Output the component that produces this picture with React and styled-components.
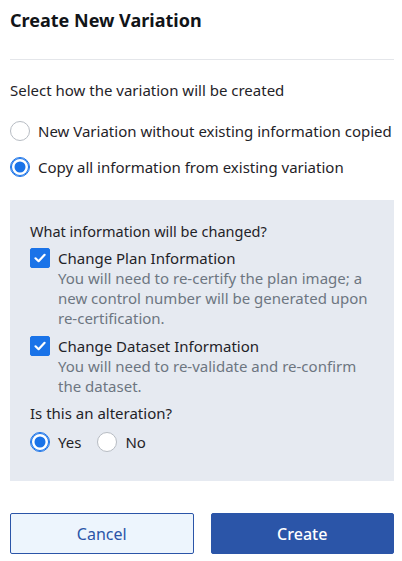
import React, { useState } from "react";
import styled, { createGlobalStyle } from "styled-components";

const GlobalStyle = createGlobalStyle`
  html, body {
    margin: 0;
    padding: 0;
    background: #ffffff;
  }
  body {
    font-family: "Noto Sans", "Open Sans", sans-serif;
    color: #1f2328;
  }
  * { box-sizing: border-box; }
`;

export default function App() {
  const [mode, setMode] = useState("copy");
  const [plan, setPlan] = useState(true);
  const [dataset, setDataset] = useState(true);
  const [alteration, setAlteration] = useState("yes");

  return (
    <>
      <GlobalStyle />
      <Dialog>
        <Header>
          <Title>Create New Variation</Title>
        </Header>
        <Body>
          <Prompt>Select how the variation will be created</Prompt>
          <Options>
            <RadioRow onClick={() => setMode("new")}>
              <Radio checked={mode === "new"} />
              <span>New Variation without existing information copied</span>
            </RadioRow>
            <RadioRow onClick={() => setMode("copy")}>
              <Radio checked={mode === "copy"} />
              <span>Copy all information from existing variation</span>
            </RadioRow>
          </Options>

          <Panel>
            <Prompt small>What information will be changed?</Prompt>
            <CheckItem onClick={() => setPlan(!plan)}>
              <Checkbox checked={plan} />
              <CheckText>
                <span>Change Plan Information</span>
                <Hint>
                  You will need to re-certify the plan image; a new control
                  number will be generated upon re-certification.
                </Hint>
              </CheckText>
            </CheckItem>
            <CheckItem onClick={() => setDataset(!dataset)}>
              <Checkbox checked={dataset} />
              <CheckText>
                <span>Change Dataset Information</span>
                <Hint>
                  You will need to re-validate and re-confirm the dataset.
                </Hint>
              </CheckText>
            </CheckItem>
            <Question>Is this an alteration?</Question>
            <InlineRadios>
              <RadioRow onClick={() => setAlteration("yes")}>
                <Radio checked={alteration === "yes"} />
                <span>Yes</span>
              </RadioRow>
              <RadioRow onClick={() => setAlteration("no")}>
                <Radio checked={alteration === "no"} />
                <span>No</span>
              </RadioRow>
            </InlineRadios>
          </Panel>
        </Body>
        <Footer>
          <Button>Cancel</Button>
          <Button primary>Create</Button>
        </Footer>
      </Dialog>
    </>
  );
}

function Checkbox({ checked }) {
  return (
    <Box checked={checked}>
      {checked && (
        <svg width="14" height="14" viewBox="0 0 14 14" fill="none">
          <path
            d="M2.5 7.3 L5.6 10.2 L11.6 3.8"
            stroke="#fff"
            strokeWidth="2.2"
            strokeLinecap="round"
            strokeLinejoin="round"
          />
        </svg>
      )}
    </Box>
  );
}

const Dialog = styled.div`
  width: 402px;
  height: 561px;
  padding: 0 8px 0 10px;
  display: flex;
  flex-direction: column;
`;

const Header = styled.div`
  padding-top: 8px;
  height: 60px;
  border-bottom: 1px solid #e4e6ea;
`;

const Title = styled.h1`
  margin: 0;
  font-size: 18px;
  font-weight: 700;
  line-height: 25px;
  color: #111418;
`;

const Body = styled.div`
  padding-top: 19px;
  font-size: 15px;
`;

const Prompt = styled.div`
  font-size: ${(p) => (p.small ? "14.5px" : "15px")};
  line-height: 22px;
`;

const Options = styled.div`
  display: flex;
  flex-direction: column;
  gap: 14px;
  margin-top: 19px;
`;

const RadioRow = styled.label`
  display: flex;
  align-items: center;
  gap: 8px;
  font-size: 15px;
  line-height: 22px;
  cursor: pointer;
  white-space: nowrap;
`;

const Radio = styled.span`
  flex: none;
  width: 20px;
  height: 20px;
  border-radius: 50%;
  background: #fff;
  border: 1px solid ${(p) => (p.checked ? "#1a73e8" : "#b7bcc3")};
  box-shadow: ${(p) =>
    p.checked
      ? "inset 0 0 0 1px #1a73e8, inset 0 0 0 3.5px #fff, inset 0 0 0 10px #1a73e8"
      : "none"};
`;

const Panel = styled.div`
  margin-top: 22px;
  height: 281px;
  background: #e6eaf1;
  padding: 20px 20px 0;
  display: flex;
  flex-direction: column;
`;

const CheckItem = styled.label`
  display: flex;
  gap: 8px;
  margin-top: 6px;
  cursor: pointer;

  & + & {
    margin-top: 8px;
  }
`;

const Box = styled.span`
  flex: none;
  width: 20px;
  height: 20px;
  margin-top: 0;
  border-radius: 2px;
  background: ${(p) => (p.checked ? "#1a73e8" : "#fff")};
  border: 1px solid ${(p) => (p.checked ? "#1a73e8" : "#b7bcc3")};
  display: flex;
  align-items: center;
  justify-content: center;
`;

const CheckText = styled.div`
  display: flex;
  flex-direction: column;
  font-size: 15px;
  line-height: 20px;
`;

const Hint = styled.span`
  color: #6d7681;
  font-size: 15px;
  line-height: 20px;
`;

const Question = styled.div`
  margin-top: 6px;
  font-size: 15px;
  line-height: 22px;
`;

const InlineRadios = styled.div`
  display: flex;
  gap: 16px;
  margin-top: 7px;
`;

const Footer = styled.div`
  display: grid;
  grid-template-columns: 1fr 1fr;
  gap: 17px;
  margin-top: 32px;
`;

const Button = styled.button`
  height: 41px;
  border-radius: 2px;
  font-family: "Noto Sans", "Open Sans", sans-serif;
  font-size: 16px;
  cursor: pointer;
  border: 1px solid #2b55a8;
  background: ${(p) => (p.primary ? "#2b55a8" : "#edf5fd")};
  color: ${(p) => (p.primary ? "#ffffff" : "#2b55a8")};
  font-weight: ${(p) => (p.primary ? 500 : 400)};
`;
